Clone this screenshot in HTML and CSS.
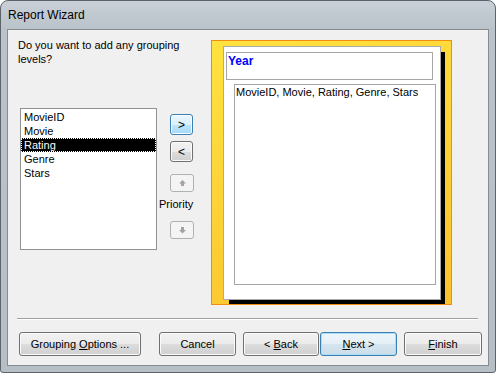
FILE: index.html
```html
<!DOCTYPE html>
<html>
<head>
<meta charset="utf-8">
<title>Report Wizard</title>
<link rel="stylesheet" href="styles.css">
</head>
<body>
<div class="window">
  <div class="titlebar">Report Wizard</div>
  <div class="client">
    <div class="top">
      <div class="left">
        <div class="question">Do you want to add any grouping levels?</div>
        <div class="listrow">
          <div class="listbox">
            <div class="item">MovieID</div>
            <div class="item">Movie</div>
            <div class="item selected">Rating</div>
            <div class="item">Genre</div>
            <div class="item">Stars</div>
          </div>
          <div class="arrows">
            <button class="btn small hot"><span>&gt;</span></button>
            <button class="btn small second"><span>&lt;</span></button>
            <button class="btn prio up" disabled>
              <svg width="7" height="7" viewBox="0 0 7 7"><polygon points="3.5,0 7,3.5 5,3.5 5,6 2,6 2,3.5 0,3.5" fill="#a3a3a3"/></svg>
            </button>
            <div class="priority">Priority</div>
            <button class="btn prio down" disabled>
              <svg width="7" height="7" viewBox="0 0 7 7"><polygon points="2,0 5,0 5,3 7,3 3.5,6.5 0,3 2,3" fill="#a3a3a3"/></svg>
            </button>
          </div>
        </div>
      </div>
      <div class="preview">
        <div class="page">
          <div class="groupbox">Year</div>
          <div class="fieldbox">MovieID, Movie, Rating, Genre, Stars</div>
        </div>
      </div>
    </div>
    <div class="separator"></div>
    <div class="buttons">
      <button class="btn wide b-group"><span>Grouping <u>O</u>ptions ...</span></button>
      <button class="btn wide b-cancel"><span>Cancel</span></button>
      <button class="btn wide b-back"><span>&lt; <u>B</u>ack</span></button>
      <button class="btn wide b-next default"><span><u>N</u>ext &gt;</span></button>
      <button class="btn wide b-finish"><span><u>F</u>inish</span></button>
    </div>
  </div>
</div>
</body>
</html>
```
FILE: styles.css
```css
* { box-sizing: border-box; }
html, body { margin: 0; padding: 0; background: #ffffff; }
body {
  font-family: "Liberation Sans", Arial, sans-serif;
  font-size: 11px;
  color: #000;
}
.window {
  width: 496px;
  height: 373px;
  border: 1px solid #5c636b;
  border-radius: 8px 8px 3px 3px;
  background: linear-gradient(to bottom, #c9d0d7 0px, #bac2ca 28px, #b6bec6 100%);
  display: flex;
  flex-direction: column;
  overflow: hidden;
}
.titlebar {
  height: 28px;
  line-height: 28px;
  padding-left: 7px;
  font-size: 12px;
  color: #000;
  flex: none;
}
.client {
  flex: 1;
  margin: 0 6px 6px 6px;
  border: 1px solid #858c94;
  background: #f0f0f0;
  display: flex;
  flex-direction: column;
}
.top {
  display: flex;
  height: 288px;
  flex: none;
}
.left {
  width: 203px;
  padding-left: 10px;
  flex: none;
}
.question {
  height: 70px;
  margin-top: 8px;
  width: 180px;
  line-height: 14px;
}
.listrow {
  display: flex;
}
.listbox {
  margin-left: 2px;
  width: 137px;
  height: 142px;
  border: 1px solid #8f9194;
  background: #fff;
  padding-top: 1px;
}
.item {
  height: 14px;
  line-height: 14px;
  padding-left: 3px;
  white-space: nowrap;
}
.item.selected {
  background: #000;
  color: #fff;
  outline: 1px dotted #ffffff;
  outline-offset: -1px;
}
.arrows {
  margin-left: 2px;
  width: 40px;
  display: flex;
  flex-direction: column;
  align-items: flex-start;
}
.btn {
  font-family: "Liberation Sans", Arial, sans-serif;
  font-size: 11px;
  color: #000;
  border: 1px solid #707070;
  border-radius: 3px;
  background: linear-gradient(to bottom, #f2f2f2 0%, #ebebeb 50%, #dddddd 50%, #cfcfcf 100%);
  box-shadow: inset 0 0 0 1px #fbfbfb;
  padding: 0;
  margin: 0;
  display: flex;
  align-items: center;
  justify-content: center;
  white-space: nowrap;
}
.btn.small {
  width: 23px;
  height: 21px;
  margin-left: 11px;
  font-size: 12px;
}
.btn.small.hot {
  margin-top: 6px;
  border-color: #3c7fb1;
  background: linear-gradient(to bottom, #eaf6fd 0%, #d9f0fc 50%, #bee6fd 50%, #a7d9f5 100%);
}
.btn.small.second { margin-top: 6px; }
.btn.prio {
  width: 24px;
  height: 18px;
  margin-left: 11px;
  border-color: #adb2b5;
  background: #f4f4f4;
  box-shadow: none;
}
.btn.prio.up { margin-top: 12px; }
.btn.prio.down { margin-top: 10px; }
.btn.prio svg { display: block; }
.priority {
  margin-top: 5px;
  height: 14px;
  line-height: 14px;
  font-size: 11px;
}
.preview {
  margin-top: 10px;
  margin-left: 0;
  width: 241px;
  height: 265px;
  border: 1px solid #f28b12;
  background: linear-gradient(160deg, #ffe23f 0%, #fdd236 50%, #fbc12d 100%);
  padding: 5px 0 0 11px;
  flex: none;
}
.page {
  width: 218px;
  height: 254px;
  background: #fff;
  border: 1px solid #aaaaaa;
  box-shadow: 5px 5px 0 -1px #000;
}
.groupbox {
  margin: 5px 0 0 2px;
  width: 207px;
  height: 28px;
  border: 1px solid #a6a6a6;
  padding: 1px 0 0 1px;
  color: #0000ff;
  font-weight: bold;
  font-size: 12px;
  line-height: 14px;
}
.fieldbox {
  margin: 4px 0 0 10px;
  width: 202px;
  height: 201px;
  border: 1px solid #a6a6a6;
  padding: 0 0 0 1px;
  line-height: 14px;
  white-space: nowrap;
}
.separator {
  margin: 0 0 0 9px;
  width: 461px;
  height: 2px;
  border-top: 1px solid #a0a0a0;
  border-bottom: 1px solid #ffffff;
  flex: none;
}
.buttons {
  display: flex;
  margin-top: 12px;
  padding-left: 11px;
}
.btn.wide { height: 24px; }
.b-group { width: 122px; }
.b-cancel { width: 77px; margin-left: 18px; }
.b-back { width: 76px; margin-left: 7px; }
.b-next { width: 77px; margin-left: 1px; }
.b-finish { width: 78px; margin-left: 7px; }
.btn.default {
  border-color: #3c7fb1;
  box-shadow: inset 0 0 0 1px #a9dcf6;
  background: linear-gradient(to bottom, #eef6fb 0%, #e4eff6 50%, #d6e6f0 50%, #c9dde9 100%);
}
u { text-decoration: underline; }
```
